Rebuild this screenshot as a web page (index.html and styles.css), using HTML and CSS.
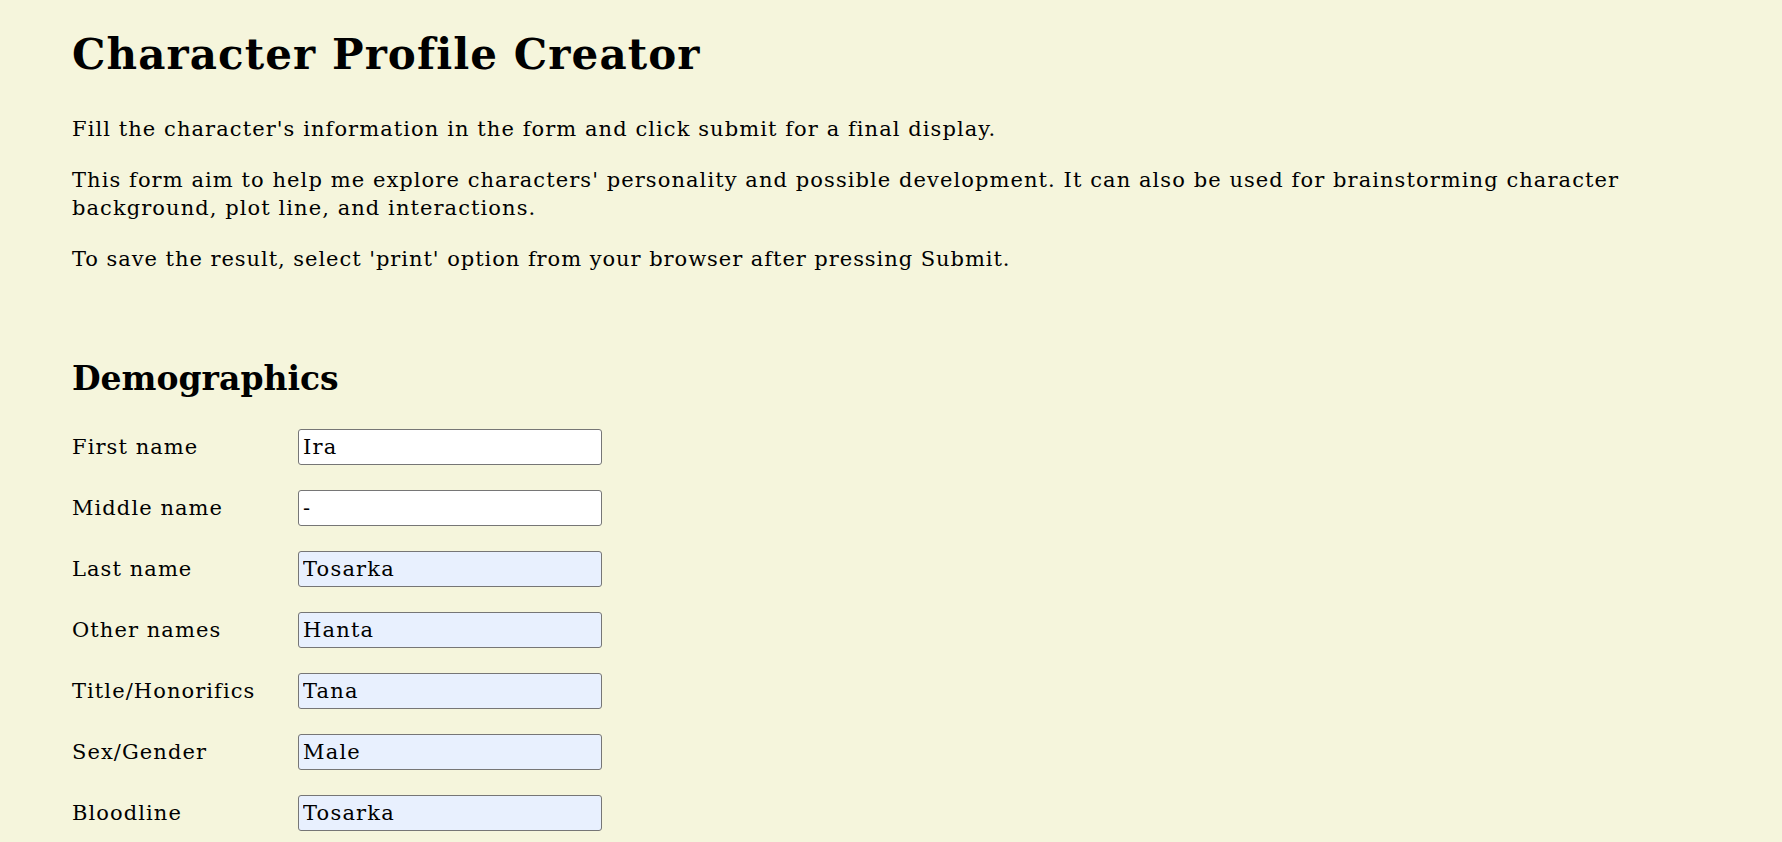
FILE: index.html
```html
<!DOCTYPE html>
<html lang="en">
<head>
<meta charset="utf-8">
<title>Character Profile Creator</title>
<link rel="stylesheet" href="styles.css">
</head>
<body>
<main class="page">
  <h1 class="title">Character Profile Creator</h1>
  <p class="intro intro-first">Fill the character's information in the form and click submit for a final display.</p>
  <p class="intro">This form aim to help me explore characters' personality and possible development. It can also be used for brainstorming character background, plot line, and interactions.</p>
  <p class="intro">To save the result, select 'print' option from your browser after pressing Submit.</p>

  <form class="profile-form">
    <section class="form-section">
      <h2 class="section-title">Demographics</h2>
      <div class="field">
        <label class="field-label" for="first-name">First name</label>
        <input class="field-input" id="first-name" type="text" value="Ira">
      </div>
      <div class="field">
        <label class="field-label" for="middle-name">Middle name</label>
        <input class="field-input" id="middle-name" type="text" value="-">
      </div>
      <div class="field">
        <label class="field-label" for="last-name">Last name</label>
        <input class="field-input field-input-filled" id="last-name" type="text" value="Tosarka">
      </div>
      <div class="field">
        <label class="field-label" for="other-names">Other names</label>
        <input class="field-input field-input-filled" id="other-names" type="text" value="Hanta">
      </div>
      <div class="field">
        <label class="field-label" for="title">Title/Honorifics</label>
        <input class="field-input field-input-filled" id="title" type="text" value="Tana">
      </div>
      <div class="field">
        <label class="field-label" for="gender">Sex/Gender</label>
        <input class="field-input field-input-filled" id="gender" type="text" value="Male">
      </div>
      <div class="field">
        <label class="field-label" for="bloodline">Bloodline</label>
        <input class="field-input field-input-filled" id="bloodline" type="text" value="Tosarka">
      </div>
    </section>
  </form>
</main>
</body>
</html>
```

FILE: styles.css
```css
html {
  background: #f5f5dc;
}

body {
  margin: 0;
  background: #f5f5dc;
  color: #000;
  font-family: "DejaVu Serif", "Liberation Serif", serif;
  font-size: 21px;
}

.page {
  padding: 0 72px;
}

.title {
  margin: 31px 0 0;
  font-size: 42px;
  line-height: 48px;
  letter-spacing: 1.1px;
  font-weight: bold;
}

.intro {
  margin: 23px 0 0;
  font-size: 21px;
  line-height: 28px;
  letter-spacing: 1.07px;
}

.intro-first {
  margin-top: 36px;
}

.intro:last-of-type {
  letter-spacing: 0.95px;
}

.profile-form {
  margin: 0;
}

.form-section {
  padding-top: 86px;
}

.section-title {
  margin: 0 0 30px;
  font-size: 33px;
  line-height: 40px;
  letter-spacing: 0;
  font-weight: bold;
}

.field {
  display: flex;
  align-items: center;
  margin-bottom: 25px;
}

.field-label {
  flex: 0 0 226px;
  font-size: 21px;
  line-height: 36px;
  letter-spacing: 1.07px;
}

.field-input {
  box-sizing: border-box;
  width: 304px;
  height: 36px;
  margin: 0;
  padding: 0 4px;
  border: 1px solid #767676;
  border-radius: 3px;
  background: #fff;
  color: #000;
  font-family: "DejaVu Serif", "Liberation Serif", serif;
  font-size: 21px;
  letter-spacing: 1.2px;
}

.field-input-filled {
  background: #e8f0fe;
}
```
